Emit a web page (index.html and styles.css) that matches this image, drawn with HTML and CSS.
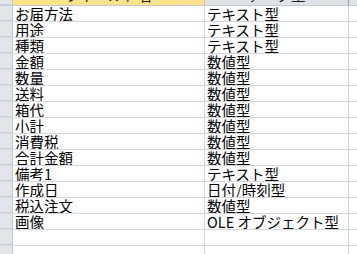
FILE: index.html
```html
<!DOCTYPE html>
<html lang="ja">
<head>
<meta charset="utf-8">
<link rel="stylesheet" href="styles.css">
</head>
<body>
<div class="sheet">
  <div class="row head">
    <div class="sel"></div>
    <div class="c1 hsel">フィールド名</div>
    <div class="c2">データ型</div>
    <div class="c3"></div>
  </div>
  <div class="row"><div class="sel"></div><div class="c1">お届方法</div><div class="c2">テキスト型</div><div class="c3"></div></div>
  <div class="row"><div class="sel"></div><div class="c1">用途</div><div class="c2">テキスト型</div><div class="c3"></div></div>
  <div class="row"><div class="sel"></div><div class="c1">種類</div><div class="c2">テキスト型</div><div class="c3"></div></div>
  <div class="row"><div class="sel"></div><div class="c1">金額</div><div class="c2">数値型</div><div class="c3"></div></div>
  <div class="row"><div class="sel"></div><div class="c1">数量</div><div class="c2">数値型</div><div class="c3"></div></div>
  <div class="row"><div class="sel"></div><div class="c1">送料</div><div class="c2">数値型</div><div class="c3"></div></div>
  <div class="row"><div class="sel"></div><div class="c1">箱代</div><div class="c2">数値型</div><div class="c3"></div></div>
  <div class="row"><div class="sel"></div><div class="c1">小計</div><div class="c2">数値型</div><div class="c3"></div></div>
  <div class="row"><div class="sel"></div><div class="c1">消費税</div><div class="c2">数値型</div><div class="c3"></div></div>
  <div class="row"><div class="sel"></div><div class="c1">合計金額</div><div class="c2">数値型</div><div class="c3"></div></div>
  <div class="row"><div class="sel"></div><div class="c1">備考1</div><div class="c2">テキスト型</div><div class="c3"></div></div>
  <div class="row"><div class="sel"></div><div class="c1">作成日</div><div class="c2">日付/時刻型</div><div class="c3"></div></div>
  <div class="row"><div class="sel"></div><div class="c1">税込注文</div><div class="c2">数値型</div><div class="c3"></div></div>
  <div class="row"><div class="sel"></div><div class="c1">画像</div><div class="c2">OLE オブジェクト型</div><div class="c3"></div></div>
  <div class="row"><div class="sel"></div><div class="c1"></div><div class="c2"></div><div class="c3"></div></div>
  <div class="row"><div class="sel"></div><div class="c1"></div><div class="c2"></div><div class="c3"></div></div>
</div>
</body>
</html>
```
FILE: styles.css
```css
html, body {
  margin: 0;
  padding: 0;
  background: #ffffff;
  overflow: hidden;
}
.sheet {
  width: 357px;
  height: 254px;
  overflow: hidden;
  font-family: "Noto Sans CJK JP", "Noto Sans", sans-serif;
  font-size: 14.5px;
  color: #000;
}
.row {
  display: flex;
  height: 15px;
  border-bottom: 1px solid #d3d9e3;
}
.row > div {
  line-height: 15px;
  white-space: nowrap;
  overflow: hidden;
}
.sel {
  width: 12px;
  flex: none;
  background: #e2e6eb;
  border-right: 1px solid #c3c8d0;
  box-shadow: inset 0 -1px 0 #c9ced6;
}
.c1 {
  width: 189px;
  flex: none;
  padding-left: 2px;
  border-right: 1px solid #d3d9e3;
}
.c2 {
  width: 141px;
  flex: none;
  padding-left: 2px;
  border-right: 1px solid #c8d3e6;
}
.c3 {
  flex: 1;
}
.head {
  height: 20px;
  margin-top: -15px;
  background: #dfe3e8;
  border-bottom: 1px solid #c5cbd3;
}
.head > div {
  line-height: 20px;
  text-align: center;
  padding-left: 0;
  color: #222;
}
.head .c1 {
  width: 191px;
}
.head .c2 {
  width: 143px;
  border-right: 1px solid #9a9ea5;
}
.head .hsel {
  background: #fbe38d;
  border-right: 1px solid #d9c16d;
}
```
